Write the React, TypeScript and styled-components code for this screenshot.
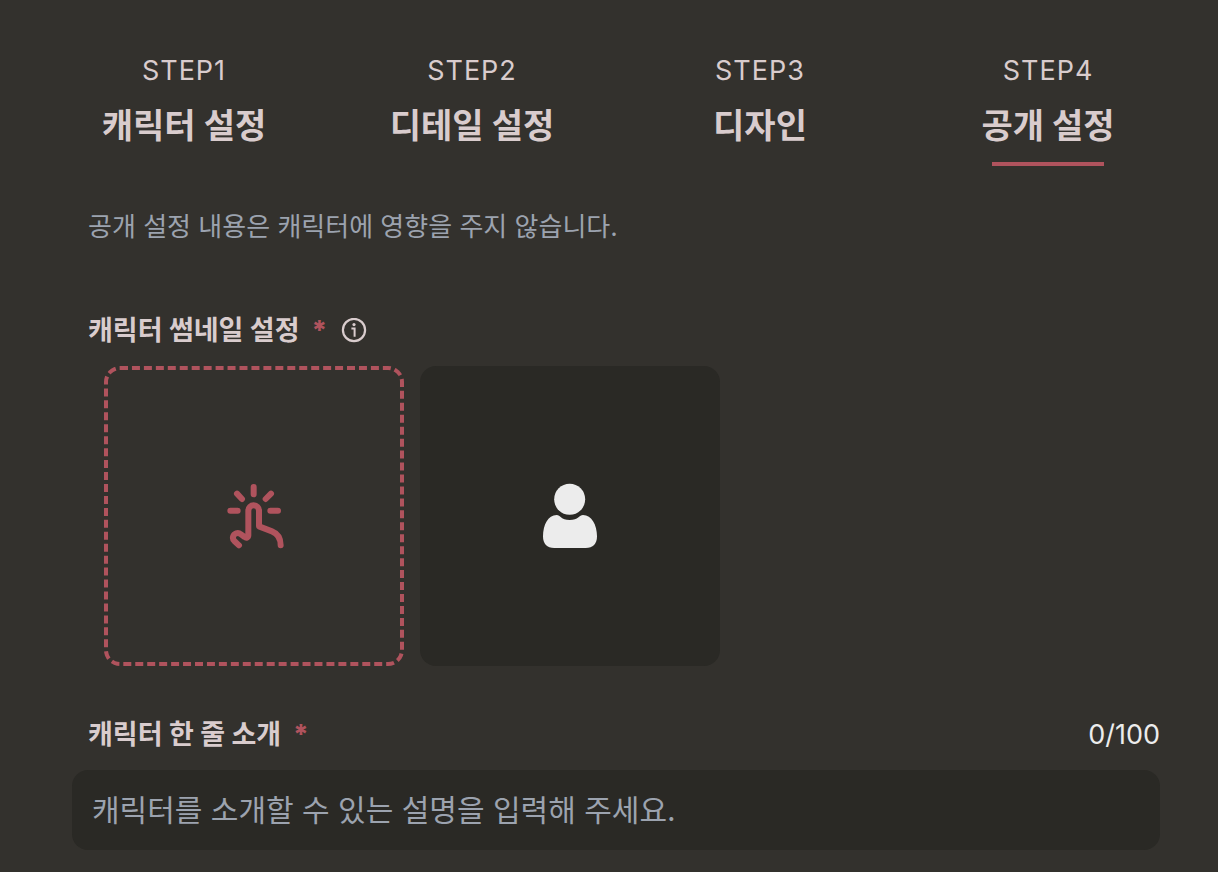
import React, { useState } from "react";
import styled, { createGlobalStyle } from "styled-components";

const color = {
  page: "#33312d",
  panel: "#2a2925",
  text: "#d9cccd",
  accent: "#b0535d",
  muted: "#9ca3af",
  light: "#ececec",
};

const GlobalStyle = createGlobalStyle`
  *, *::before, *::after { box-sizing: border-box; }
  body {
    margin: 0;
    background: ${color.page};
    color: ${color.text};
    font-family: Inter, "Noto Sans CJK KR", sans-serif;
  }
  button, input { font: inherit; color: inherit; }
`;

const Page = styled.main`
  padding: 51px 26px 22px 40px;
`;

const Steps = styled.nav`
  display: grid;
  grid-template-columns: repeat(4, 1fr);
`;

const Step = styled.button`
  display: flex;
  flex-direction: column;
  align-items: center;
  padding: 0;
  border: 0;
  background: none;
  cursor: pointer;
`;

const StepNumber = styled.span`
  font-size: 27px;
  line-height: 40px;
  letter-spacing: 1px;
`;

const StepTitle = styled.span`
  margin-top: 9px;
  font-size: 34px;
  font-weight: 700;
  line-height: 52px;
`;

const Underline = styled.span<{ $active: boolean }>`
  width: 112px;
  height: 4px;
  margin-top: 10px;
  background: ${(p) => (p.$active ? color.accent : "transparent")};
`;

const Content = styled.form`
  padding: 0 32px;
`;

const Notice = styled.p`
  margin: 41px 16px 0;
  color: ${color.muted};
  font-size: 26px;
  line-height: 40px;
`;

const Field = styled.section<{ $gap: number }>`
  margin-top: ${(p) => p.$gap}px;
`;

const FieldHead = styled.div`
  display: flex;
  align-items: center;
  padding-left: 16px;
  font-size: 27px;
  line-height: 40px;
`;

const FieldLabel = styled.label`
  font-weight: 700;
`;

const Required = styled.span`
  margin-left: 12px;
  color: ${color.accent};
  font-weight: 800;
`;

const InfoButton = styled.button`
  display: flex;
  margin-left: 14px;
  padding: 0;
  border: 0;
  background: none;
  cursor: pointer;
`;

const Counter = styled.output`
  margin-left: auto;
  color: ${color.light};
`;

const Thumbnails = styled.div`
  display: flex;
  flex-wrap: wrap;
  gap: 16px;
  margin-top: 15px;
  padding-left: 32px;
`;

const Thumbnail = styled.button<{ $dashed?: boolean }>`
  display: flex;
  align-items: center;
  justify-content: center;
  width: 300px;
  aspect-ratio: 1;
  padding: 0;
  border: ${(p) => (p.$dashed ? `4px dashed ${color.accent}` : "0")};
  border-radius: 16px;
  background: ${(p) => (p.$dashed ? "transparent" : color.panel)};
  cursor: pointer;
`;

const TextInput = styled.input`
  display: block;
  width: 100%;
  height: 80px;
  margin-top: 15px;
  padding: 0 20px;
  border: 0;
  border-radius: 16px;
  background: ${color.panel};
  font-size: 30px;
  &::placeholder { color: ${color.muted}; opacity: 1; }
`;

function InfoIcon() {
  return (
    <svg width="26" height="26" viewBox="0 0 26 26" fill="none" stroke={color.text} strokeWidth="2.2" aria-hidden="true">
      <circle cx="13" cy="12" r="11.1" />
      <path d="M10.4 10.6H13.6V18.8" strokeWidth="2" />
      <circle cx="13" cy="6.6" r="1.6" fill={color.text} stroke="none" />
    </svg>
  );
}

function TapIcon() {
  return (
    <svg width="60" height="68" viewBox="42 36 180 204" fill="none" stroke={color.accent} strokeWidth="18" strokeLinecap="round" strokeLinejoin="round" aria-hidden="true">
      <path d="M131 51V73M81 71L96 87M183 71L167 87M61 122H83M181 122H204" />
      <path d="M87 226L73 213C65 205 69 194 79 190C85 188 89 190 93 193L104 201C109 205 115 202 115 196V122A16 16 0 0 1 147 122V169L186 184C204 191 212 203 212 226" />
    </svg>
  );
}

function PersonIcon() {
  return (
    <svg width="66" height="66" viewBox="36 39 198 198" fill={color.light} aria-hidden="true">
      <circle cx="134" cy="88" r="46.5" />
      <path d="M95 135C69 135 54 165 54 199C54 222 66 234 88 234H182C204 234 216 222 216 199C216 165 200 135 174 135C163 135 160 150 134 150C108 150 106 135 95 135Z" />
    </svg>
  );
}

const steps = ["캐릭터 설정", "디테일 설정", "디자인", "공개 설정"];
const maxLength = 100;

export default function App() {
  const [active, setActive] = useState(3);
  const [intro, setIntro] = useState("");

  return (
    <>
      <GlobalStyle />
      <Page>
        <Steps>
          {steps.map((title, i) => (
            <Step key={title} type="button" aria-current={i === active ? "step" : undefined} onClick={() => setActive(i)}>
              <StepNumber>{`STEP${i + 1}`}</StepNumber>
              <StepTitle>{title}</StepTitle>
              <Underline $active={i === active} />
            </Step>
          ))}
        </Steps>
        <Content onSubmit={(e) => e.preventDefault()}>
          <Notice>공개 설정 내용은 캐릭터에 영향을 주지 않습니다.</Notice>
          <Field $gap={64}>
            <FieldHead>
              <FieldLabel htmlFor="thumbnail">캐릭터 썸네일 설정</FieldLabel>
              <Required>*</Required>
              <InfoButton type="button" aria-label="썸네일 안내">
                <InfoIcon />
              </InfoButton>
            </FieldHead>
            <Thumbnails>
              <Thumbnail id="thumbnail" type="button" $dashed>
                <TapIcon />
              </Thumbnail>
              <Thumbnail type="button" aria-label="썸네일 미리보기">
                <PersonIcon />
              </Thumbnail>
            </Thumbnails>
          </Field>
          <Field $gap={49}>
            <FieldHead>
              <FieldLabel htmlFor="intro">캐릭터 한 줄 소개</FieldLabel>
              <Required>*</Required>
              <Counter htmlFor="intro">{`${intro.length}/${maxLength}`}</Counter>
            </FieldHead>
            <TextInput
              id="intro"
              maxLength={maxLength}
              placeholder="캐릭터를 소개할 수 있는 설명을 입력해 주세요."
              value={intro}
              onChange={(e) => setIntro(e.target.value)}
            />
          </Field>
        </Content>
      </Page>
    </>
  );
}
